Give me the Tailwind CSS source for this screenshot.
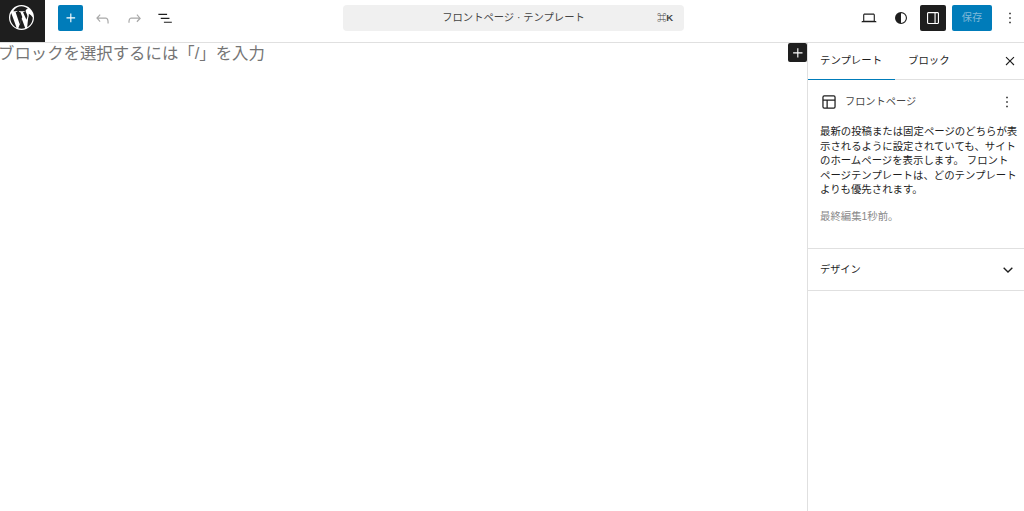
<!DOCTYPE html>
<html lang="ja">
<head>
    <meta charset="UTF-8">
    <title>フロントページ · テンプレート</title>
    <script src="https://cdn.jsdelivr.net/npm/@tailwindcss/browser@4"></script>
</head>
<body class="bg-white text-[#1e1e1e] h-[511px] w-[1024px] overflow-hidden flex flex-col font-['Liberation_Sans','Noto_Sans_CJK_JP',sans-serif]">

    <!-- Toolbar -->
    <header class="h-[43px] shrink-0 flex items-start border-b border-[#e0e0e0]">
        <a class="w-[45px] h-[42px] pb-[7px] pr-[3px] bg-[#1e1e1e] flex items-center justify-center shrink-0">
            <svg class="w-[25px] h-[25px]" viewBox="0 0 80 80" fill="#fff">
                <path d="M40 0a40 40 0 1 0 0 80 40 40 0 0 0 0-80zM4 40c0-5.2 1.100-10.200 3.100-14.700L24.300 72.500C12.300 66.700 4 54.300 4 40zm36 36c-3.500 0-6.900-.5-10.200-1.500l10.800-31.400 11.100 30.300c.1.200.2.300.2.500-3.700 1.400-7.700 2.100-11.900 2.100zm5-52.900c2.200-.1 4.100-.4 4.100-.4 1.900-.2 1.700-3.100-.3-3-5.900.5-9.700.5-15.500 0-2-.1-2.200 2.800-.3 3 0 0 1.800.2 3.800.4l5.700 15.500-8 23.900-13.200-39.400c2.200-.1 4.200-.4 4.200-.4 2-.2 1.700-3.100-.3-3-5.900.5-9.700.5-11.600.4C19.900 9.300 29.400 4 40 4c7.900 0 15.100 3 20.500 8-3.900-.1-7 3-7.300 6.800-.2 5.100 6.400 10.300 5.500 18.700l-2.900 9.600zm13.200 48.300L61.200 42.300c1.700-4.300 2.300-7.800 2.300-10.900 0-1.100-.1-2.100-.2-3.100A35.800 35.800 0 0 1 76 40c0 13.300-7.200 24.900-17.800 31.200z"/>
            </svg>
        </a>

        <div class="flex items-center ml-[13px] mt-[5px]">
            <button class="w-[25px] h-[26px] bg-[#007cba] rounded-[2px] flex items-center justify-center">
                <svg class="w-[18px] h-[18px]" viewBox="0 0 24 24" fill="#fff"><path d="M11 12.500V17.500H12.500V12.500H17.500V11H12.500V6H11V11H6V12.500H11Z"/></svg>
            </button>
            <button class="w-[24px] h-[24px] ml-[7px] flex items-center justify-center">
                <svg class="w-[19px] h-[19px]" viewBox="0 0 24 24" fill="#a8a8a8"><path d="M18.300 11.700c-.6-.6-1.400-.9-2.300-.9H6.700l2.900-3.300-1.100-1-4.500 5L8.500 16.500l1-1-2.700-3.100H16c.5 0 .9.200 1.300.5 1 1 1 3.400 1 4.500v.8h1.500v-.8c0-1.400 0-4.200-1.500-5.700z"/></svg>
            </button>
            <button class="w-[24px] h-[24px] ml-[8px] flex items-center justify-center">
                <svg class="w-[19px] h-[19px]" viewBox="0 0 24 24" fill="#a8a8a8"><path d="M15.600 6.500l-1.100 1 2.900 3.300H8c-.9 0-1.700.3-2.300.9-1.400 1.500-1.400 4.200-1.400 5.600v.2h1.500v-.3c0-1.100 0-3.500 1-4.500.3-.3.700-.5 1.300-.5h9.200L14.500 15.500l1.100 1.100 4.500-4.600-4.500-5.500z"/></svg>
            </button>
            <button class="w-[24px] h-[24px] ml-[7px] flex items-center justify-center">
                <svg class="w-[19px] h-[19px]" viewBox="0 0 24 24" fill="#1e1e1e"><path d="M3 6h11v1.500H3V6zm3 5h11v1.500H6V11zm4 5h10v1.500H10V16z"/></svg>
            </button>
        </div>

        <div class="ml-[166px] mt-[5px] w-[341px] h-[26px] bg-[#f0f0f0] rounded-[4px] flex items-center relative text-[#444] text-[10.300px]">
            <span class="w-full text-center">フロントページ · テンプレート</span>
            <span class="absolute right-[11px] text-[9.500px] font-bold tracking-[-0.2px]">⌘K</span>
        </div>

        <div class="ml-auto flex items-center mt-[5px]">
            <button class="w-[25px] h-[26px] flex items-center justify-center">
                <svg class="w-[18px] h-[18px]" viewBox="0 0 24 24" fill="#1e1e1e"><path d="M20.500 16h-.7V8c0-1.100-.9-2-2-2H6.200c-1.100 0-2 .9-2 2v8h-.7c-.8 0-1.500.7-1.500 1.500h20c0-.8-.7-1.500-1.500-1.500zM5.700 8c0-.3.2-.5.500-.5h11.600c.3 0 .5.200.5.500v7.600H5.700V8z"/></svg>
            </button>
            <button class="w-[25px] h-[26px] ml-[7px] flex items-center justify-center">
                <svg class="w-[18px] h-[18px]" viewBox="0 0 24 24" fill="#1e1e1e"><path d="M12 4a8 8 0 1 0 0 16 8 8 0 0 0 0-16zm0 14.500v-13a6.500 6.500 0 0 1 0 13z"/></svg>
            </button>
            <button class="w-[26px] h-[26px] ml-[7px] bg-[#1e1e1e] rounded-[2px] flex items-center justify-center">
                <svg class="w-[18px] h-[18px]" viewBox="0 0 24 24" fill="#fff"><path d="M18 4H6c-1.100 0-2 .9-2 2v12c0 1.100.9 2 2 2h12c1.100 0 2-.9 2-2V6c0-1.100-.9-2-2-2zM5.500 18V6c0-.3.2-.5.500-.5h8v13H6c-.3 0-.5-.2-.5-.5zm13 0c0 .3-.2.5-.5.500h-2.500v-13H18c.3 0 .5.200.5.500v12z"/></svg>
            </button>
            <button class="w-[40px] h-[26px] ml-[6px] bg-[#007cba] rounded-[2px] text-[10.300px] text-[#7fb8d8]">保存</button>
            <button class="w-[24px] h-[26px] ml-[6px] mr-[2px] flex items-center justify-center">
                <svg class="w-[18px] h-[18px]" viewBox="0 0 24 24" fill="#1e1e1e"><path d="M13 19h-2v-2h2v2zm0-6h-2v-2h2v2zm0-6h-2V5h2v2z"/></svg>
            </button>
        </div>
    </header>

    <div class="flex flex-1 min-h-0">
        <!-- Canvas -->
        <main class="flex-1 relative">
            <p class="text-[16.400px] leading-[21px] text-[#757575] -ml-[2px] whitespace-nowrap">ブロックを選択するには「/」を入力</p>
            <button class="absolute right-0 top-0 w-[19px] h-[19px] bg-[#1e1e1e] rounded-[2px] flex items-center justify-center">
                <svg class="w-[18px] h-[18px]" viewBox="0 0 24 24" fill="#fff"><path d="M11 12.500V18H12.500V12.500H18V11H12.500V5.500H11V11H5.500V12.500H11Z"/></svg>
            </button>
        </main>

        <!-- Sidebar -->
        <aside class="w-[217px] shrink-0 border-l border-[#e0e0e0] text-[10.400px]">
            <div class="h-[37px] flex items-center border-b border-[#e0e0e0] relative">
                <div class="w-[87px] h-[37px] flex items-center pl-[12px] border-b-[1.500px] border-[#007cba]">テンプレート</div>
                <div class="pl-[13px]">ブロック</div>
                <svg class="absolute right-[7px] w-[14px] h-[14px]" viewBox="0 0 24 24" fill="#1e1e1e"><path d="M13.400 12l6.100-6.100-1.400-1.400-6.100 6.100-6.100-6.100-1.400 1.400 6.100 6.100-6.100 6.100 1.400 1.400 6.100-6.100 6.100 6.100 1.400-1.400z"/></svg>
            </div>

            <section class="px-[12px] h-[169px] border-b border-[#e0e0e0]">
                <div class="h-[43px] flex items-center">
                    <svg class="w-[20px] h-[20px] -ml-[1px]" viewBox="0 0 24 24" fill="none" stroke="#1e1e1e" stroke-width="1.500"><rect x="4.750" y="4.750" width="14.500" height="14.500" rx="1.500"/><path d="M4.750 9.750h14.500M9.750 9.750v9.500"/></svg>
                    <span class="ml-[6px] text-[10.200px] text-[#444]">フロントページ</span>
                    <svg class="w-[18px] h-[18px] ml-auto -mr-[4px]" viewBox="0 0 24 24" fill="#1e1e1e"><path d="M13 19h-2v-2h2v2zm0-6h-2v-2h2v2zm0-6h-2V5h2v2z"/></svg>
                </div>
                <p class="leading-[14.500px] w-[198px] mt-[2px]">最新の投稿または固定ページのどちらが表示されるように設定されていても、サイトのホームページを表示します。 フロントページテンプレートは、どのテンプレートよりも優先されます。</p>
                <p class="mt-[12px] text-[#8a8a8a] leading-[14px]">最終編集1秒前。</p>
            </section>

            <section class="h-[42px] px-[12px] flex items-center justify-between border-b border-[#e0e0e0] text-[10.200px]">
                <span>デザイン</span>
                <svg class="w-[16px] h-[16px] -mr-[4px]" viewBox="0 0 24 24" fill="none" stroke="#1e1e1e" stroke-width="2"><path d="M5.500 8.500l6.500 6.500 6.500-6.500"/></svg>
            </section>
        </aside>
    </div>
</body>
</html>
